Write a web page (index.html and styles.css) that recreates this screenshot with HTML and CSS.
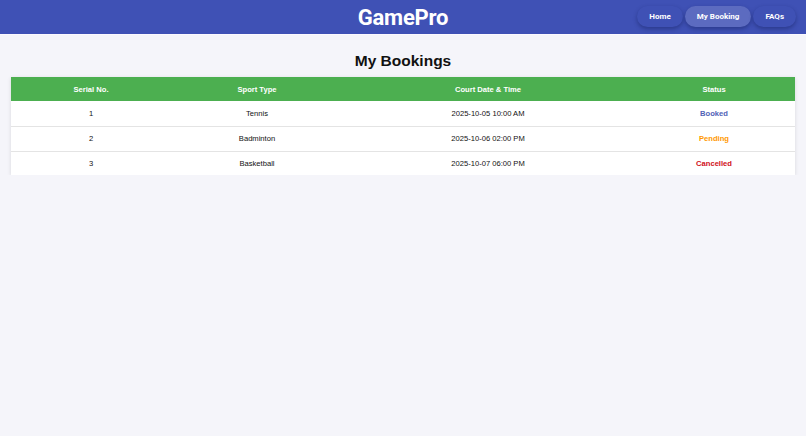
FILE: index.html
```html
<!DOCTYPE html>
<html lang="en">
<head>
<meta charset="utf-8">
<title>GamePro - My Bookings</title>
<link rel="stylesheet" href="styles.css">
</head>
<body>
<header class="topbar">
  <div class="brand">GamePro</div>
  <nav class="nav">
    <a class="nav-btn" href="#">Home</a>
    <a class="nav-btn active" href="#">My Booking</a>
    <a class="nav-btn" href="#">FAQs</a>
  </nav>
</header>
<main class="content">
  <h2 class="page-title">My Bookings</h2>
  <table class="bookings">
    <thead>
      <tr>
        <th class="c1">Serial No.</th>
        <th class="c2">Sport Type</th>
        <th class="c3">Court Date &amp; Time</th>
        <th class="c4">Status</th>
      </tr>
    </thead>
    <tbody>
      <tr><td>1</td><td>Tennis</td><td>2025-10-05 10:00 AM</td><td class="st booked">Booked</td></tr>
      <tr><td>2</td><td>Badminton</td><td>2025-10-06 02:00 PM</td><td class="st pending">Pending</td></tr>
      <tr><td>3</td><td>Basketball</td><td>2025-10-07 06:00 PM</td><td class="st cancelled">Cancelled</td></tr>
    </tbody>
  </table>
</main>
</body>
</html>
```

FILE: styles.css
```css
* { box-sizing: border-box; }
html, body { margin: 0; padding: 0; }
body {
  background: #f5f5fa;
  font-family: "Liberation Sans", Arial, sans-serif;
  color: #222;
}
.topbar {
  position: relative;
  height: 35px;
  background: #3f51b5;
  display: flex;
  align-items: center;
  justify-content: center;
  border-bottom: 1px solid #fbf9ff;
}
.brand {
  font-family: Roboto, "Liberation Sans", sans-serif;
  font-weight: 700;
  font-size: 22px;
  color: #fff;
  letter-spacing: -0.2px;
}
.nav {
  position: absolute;
  right: 10px;
  top: 6px;
  display: flex;
  gap: 2px;
}
.nav-btn {
  font-family: Roboto, "Liberation Sans", sans-serif;
  font-weight: 700;
  font-size: 8px;
  color: #fff;
  text-decoration: none;
  padding: 6px 12px;
  line-height: 9px;
  border-radius: 11px;
  background: #3f51b5;
  box-shadow: 0 2px 4px rgba(20, 30, 90, 0.45);
}
.nav-btn.active {
  background: #5c6bc0;
}
.content {
  padding: 0 11px;
}
.page-title {
  margin: 0;
  padding-top: 17px;
  height: 42px;
  text-align: center;
  font-size: 15.5px;
  font-weight: 700;
  color: #111;
  line-height: 18px;
}
.bookings {
  width: 100%;
  border-collapse: collapse;
  background: #fff;
  box-shadow: 0 1px 4px rgba(0, 0, 0, 0.12);
  table-layout: fixed;
}
.bookings th {
  background: #4caf50;
  color: #fff;
  font-size: 7.6px;
  font-weight: 700;
  height: 24px;
  padding: 0;
}
.c1 { width: 160px; }
.c2 { width: 172px; }
.c3 { width: 290px; }
.c4 { width: 162px; }
.bookings td {
  text-align: center;
  font-size: 7.6px;
  color: #111;
  height: 25px;
  padding: 0;
  border-bottom: 1px solid #e4e4e4;
}
.bookings tbody tr:last-child td { border-bottom: none; height: 24px; }
.bookings td.st { font-weight: 700; }
.bookings td.booked { color: #5162b6; }
.bookings td.pending { color: #ff9800; }
.bookings td.cancelled { color: #d0101a; }
```
